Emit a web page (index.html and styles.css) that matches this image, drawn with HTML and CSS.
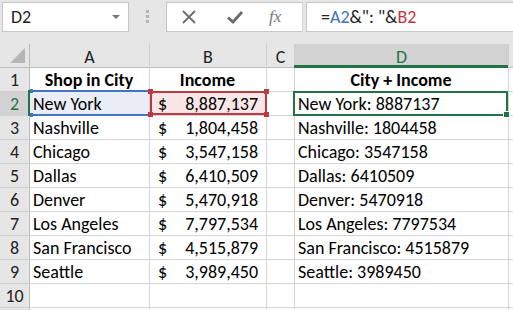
FILE: index.html
```html
<!DOCTYPE html>
<html>
<head>
<meta charset="utf-8">
<link rel="stylesheet" href="styles.css">
</head>
<body>
<div class="top">
  <div class="namebox"><span class="nb-text">D2</span><span class="caret"></span></div>
  <div class="dots"><i></i><i></i><i></i></div>
  <div class="btns">
    <svg class="ico" width="16" height="16" viewBox="0 0 16 16"><path d="M2 2 L14 14 M14 2 L2 14" stroke="#6b6b6b" stroke-width="1.8" fill="none"/></svg>
    <svg class="ico" width="18" height="16" viewBox="0 0 18 16"><path d="M2 8.5 L7 13 L16 3" stroke="#6b6b6b" stroke-width="2.8" fill="none"/></svg>
    <span class="fx">fx</span>
  </div>
  <div class="formula">=<span class="ra">A2</span>&amp;": "&amp;<span class="rb">B2</span></div>
</div>
<div class="sheet">
  <div class="ch corner"><span class="tri"></span></div>
  <div class="ch">A</div>
  <div class="ch">B</div>
  <div class="ch">C</div>
  <div class="ch sel">D</div>
  <div class="ch last"></div>

  <div class="rh">1</div>
  <div class="c hd">Shop in City</div>
  <div class="c hd">Income</div>
  <div class="c"></div>
  <div class="c hd">City + Income</div>
  <div class="c last"></div>

  <div class="rh sel">2</div>
  <div class="c fa">New York</div>
  <div class="c money fb"><span>$</span><span>8,887,137</span></div>
  <div class="c"></div>
  <div class="c">New York: 8887137</div>
  <div class="c last"></div>

  <div class="rh">3</div>
  <div class="c">Nashville</div>
  <div class="c money"><span>$</span><span>1,804,458</span></div>
  <div class="c"></div>
  <div class="c">Nashville: 1804458</div>
  <div class="c last"></div>

  <div class="rh">4</div>
  <div class="c">Chicago</div>
  <div class="c money"><span>$</span><span>3,547,158</span></div>
  <div class="c"></div>
  <div class="c">Chicago: 3547158</div>
  <div class="c last"></div>

  <div class="rh">5</div>
  <div class="c">Dallas</div>
  <div class="c money"><span>$</span><span>6,410,509</span></div>
  <div class="c"></div>
  <div class="c">Dallas: 6410509</div>
  <div class="c last"></div>

  <div class="rh">6</div>
  <div class="c">Denver</div>
  <div class="c money"><span>$</span><span>5,470,918</span></div>
  <div class="c"></div>
  <div class="c">Denver: 5470918</div>
  <div class="c last"></div>

  <div class="rh">7</div>
  <div class="c">Los Angeles</div>
  <div class="c money"><span>$</span><span>7,797,534</span></div>
  <div class="c"></div>
  <div class="c">Los Angeles: 7797534</div>
  <div class="c last"></div>

  <div class="rh">8</div>
  <div class="c">San Francisco</div>
  <div class="c money"><span>$</span><span>4,515,879</span></div>
  <div class="c"></div>
  <div class="c">San Francisco: 4515879</div>
  <div class="c last"></div>

  <div class="rh">9</div>
  <div class="c">Seattle</div>
  <div class="c money"><span>$</span><span>3,989,450</span></div>
  <div class="c"></div>
  <div class="c">Seattle: 3989450</div>
  <div class="c last"></div>

  <div class="rh">10</div>
  <div class="c"></div>
  <div class="c"></div>
  <div class="c"></div>
  <div class="c"></div>
  <div class="c last"></div>

  <div class="rh"></div>
  <div class="c"></div>
  <div class="c"></div>
  <div class="c"></div>
  <div class="c"></div>
  <div class="c last"></div>

  <div class="sel-a"><i class="sq tl"></i><i class="sq bl"></i></div>
  <div class="sel-b"><i class="sq tl"></i><i class="sq tr"></i><i class="sq bl"></i><i class="sq br"></i></div>
  <div class="sel-d"><i class="handle"></i></div>
  <div class="d-line"></div>
  <div class="r-line"></div>
</div>
</body>
</html>
```

FILE: styles.css
```css
html, body {
  margin: 0;
  padding: 0;
  background: #ffffff;
  font-family: "Carlito", "Liberation Sans", Arial, sans-serif;
  font-size: 18px;
  color: #000;
  overflow: hidden;
}

.top {
  height: 44px;
  background: #e6e6e6;
  display: flex;
  align-items: flex-start;
  padding-top: 2px;
  box-sizing: border-box;
}

.namebox {
  margin-left: 2px;
  width: 127px;
  height: 30px;
  box-sizing: border-box;
  background: #fff;
  border: 1px solid #c6c6c6;
  display: flex;
  align-items: center;
  justify-content: space-between;
  padding: 0 8px 0 8px;
  color: #222;
}

.caret {
  width: 0;
  height: 0;
  border-left: 4px solid transparent;
  border-right: 4px solid transparent;
  border-top: 4px solid #777;
}

.dots {
  width: 37px;
  display: flex;
  flex-direction: column;
  align-items: center;
  gap: 2px;
  padding-top: 8px;
}
.dots i {
  display: block;
  width: 3px;
  height: 3px;
  background: #b5b5b5;
}

.btns {
  width: 137px;
  height: 30px;
  box-sizing: border-box;
  background: #fff;
  border: 1px solid #c6c6c6;
  border-right: 1px solid #d6d6d6;
  display: flex;
  align-items: center;
  padding-left: 14px;
  gap: 29px;
}
.ico { display: block; }
.fx {
  font-family: "Liberation Serif", serif;
  font-style: italic;
  font-size: 17px;
  color: #777;
  margin-left: -4px;
}

.formula {
  flex: 1;
  height: 30px;
  box-sizing: border-box;
  background: #fff;
  border: 1px solid #c6c6c6;
  border-right: none;
  margin-left: 3px;
  display: flex;
  align-items: center;
  padding-left: 14px;
  color: #222;
  white-space: pre;
}
.ra { color: #3c73c8; }
.rb { color: #c0343a; }

.sheet {
  position: relative;
  display: grid;
  grid-template-columns: 30px 120px 117px 28px 214px 1fr;
  grid-auto-rows: 24px;
  height: 266px;
  overflow: hidden;
}

.ch {
  background: #e6e6e6;
  border-right: 1px solid #cfcfcf;
  border-bottom: 1px solid #bdbdbd;
  display: flex;
  align-items: center;
  justify-content: center;
  color: #222;
  padding-top: 2px;
  box-sizing: border-box;
}
.ch.corner { position: relative; border-right: 1px solid #bdbdbd; }
.tri {
  position: absolute;
  right: 4px;
  bottom: 4px;
  width: 0;
  height: 0;
  border-left: 15px solid transparent;
  border-bottom: 15px solid #b6b6b6;
}
.ch.sel { background: #d2d2d2; color: #217346; }
.ch.last { border-right: none; }

.rh {
  background: #e6e6e6;
  border-right: 1px solid #bdbdbd;
  border-bottom: 1px solid #cfcfcf;
  display: flex;
  align-items: center;
  justify-content: center;
  color: #222;
  box-sizing: border-box;
  padding-top: 1px;
}
.rh.sel { background: #d2d2d2; color: #217346; }

.c {
  border-right: 1px solid #d4d4d4;
  border-bottom: 1px solid #d4d4d4;
  box-sizing: border-box;
  display: flex;
  align-items: center;
  padding: 1px 4px 0 3px;
  white-space: nowrap;
  overflow: visible;
}
.c.last { border-right: none; }
.c.hd {
  font-weight: bold;
  justify-content: center;
}
.c.money {
  justify-content: space-between;
  padding: 1px 8px 0 8px;
}
.c.fa { background: #e8edf6; }
.c.fb { background: #fae6e6; }

.sel-a {
  position: absolute;
  left: 30px;
  top: 46px;
  width: 119px;
  height: 26px;
  box-sizing: border-box;
  border-top: 2px solid #4472c4;
  border-bottom: 2px solid #4472c4;
}
.sel-a .sq { background: #4472c4; width: 3px; height: 4px; }
.sel-a .sq.tl { left: 0; top: -3px; }
.sel-a .sq.bl { left: 0; bottom: -3px; }

.sel-b {
  position: absolute;
  left: 150px;
  top: 47px;
  width: 117px;
  height: 24px;
  box-sizing: border-box;
  border: 2px solid #c0393f;
}
.sq {
  position: absolute;
  display: block;
  width: 5px;
  height: 5px;
  background: #c0393f;
}
.sel-b .sq.tl { left: -4px; top: -4px; }
.sel-b .sq.tr { right: -4px; top: -4px; }
.sel-b .sq.bl { left: -4px; bottom: -4px; }
.sel-b .sq.br { right: -4px; bottom: -4px; }

.sel-d {
  position: absolute;
  left: 293px;
  top: 47px;
  width: 215px;
  height: 25px;
  box-sizing: border-box;
  border: 2px solid #217346;
}
.handle {
  position: absolute;
  display: block;
  right: -4px;
  bottom: -4px;
  width: 5px;
  height: 5px;
  background: #217346;
  border: 1px solid #fff;
}

.d-line {
  position: absolute;
  left: 294px;
  top: 21px;
  width: 214px;
  height: 3px;
  background: #217346;
}
.r-line {
  position: absolute;
  left: 28px;
  top: 46px;
  width: 2px;
  height: 26px;
  background: #217346;
}
```
